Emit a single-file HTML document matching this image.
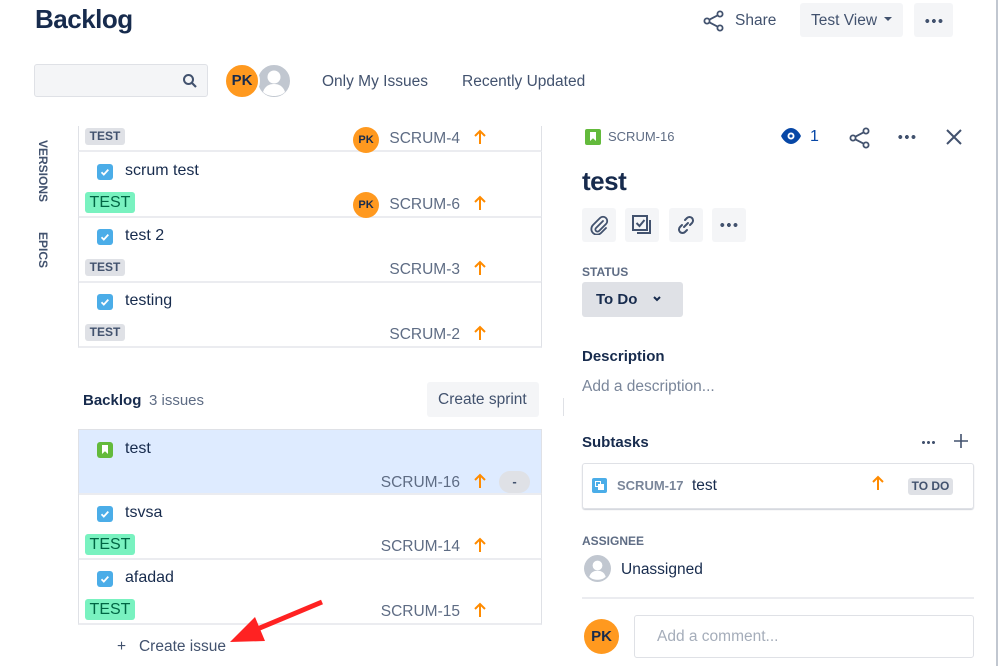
<!DOCTYPE html>
<html><head><meta charset="utf-8">
<style>
*{box-sizing:border-box;margin:0;padding:0}
body{width:999px;height:666px;overflow:hidden;background:#fff;font-family:"Liberation Sans",sans-serif;color:#172b4d;position:relative}
.a{position:absolute}
.row{position:absolute;left:78px;width:464px;height:66px;border-left:1px solid #dfe1e6;border-right:1px solid #dfe1e6;border-bottom:2px solid #ebecf0}
.cb{position:absolute;left:18px;top:12px;width:16px;height:16px;border-radius:3px;background:#4bade8}
.ttl{position:absolute;left:46px;top:10px;font-size:16px;line-height:18px}
.gt{position:absolute;left:6px;top:42px;width:40px;height:17px;background:#dfe1e6;border-radius:3px;font-size:12px;font-weight:bold;color:#42526e;text-align:center;line-height:17px}
.gr{position:absolute;left:6px;top:40px;width:50px;height:21px;background:#79f2c0;border-radius:3px;font-size:16px;color:#006644;text-align:center;line-height:21px}
.k{position:absolute;right:81px;top:44px;font-size:15.5px;color:#5e6c84;line-height:18px}
.ar{position:absolute;left:394px;top:43px}
.pk{position:absolute;width:26px;height:26px;border-radius:50%;background:#ff991f;color:#172b4d;font-size:11px;font-weight:bold;text-align:center;line-height:26px}
.btn{position:absolute;background:#f4f5f7;border-radius:3px}
.lbl{position:absolute;font-size:12px;font-weight:bold;color:#5e6c84}
</style></head><body>
<svg width="0" height="0" style="position:absolute"><defs>
<symbol id="up" viewBox="0 0 14 16"><path d="M7 15V2M2 7l5-5 5 5" stroke="#ff8b00" stroke-width="2" fill="none"/></symbol>
<symbol id="chk" viewBox="0 0 16 16"><path d="M4.5 8.3l2.3 2.3 4.5-5" stroke="#fff" stroke-width="1.8" fill="none"/></symbol>
</defs></svg>

<div class="a" style="left:35px;top:4px;font-size:26px;font-weight:bold;letter-spacing:-0.5px">Backlog</div>

<svg class="a" style="left:703px;top:10px" width="22" height="22" viewBox="0 0 22 22"><circle cx="17" cy="4" r="2.6" fill="none" stroke="#42526e" stroke-width="1.8"/><circle cx="17" cy="18" r="2.6" fill="none" stroke="#42526e" stroke-width="1.8"/><circle cx="4" cy="11" r="2.6" fill="none" stroke="#42526e" stroke-width="1.8"/><path d="M6.3 9.7l8.4-4.4M6.3 12.3l8.4 4.4" stroke="#42526e" stroke-width="1.8"/></svg>
<div class="a" style="left:735px;top:12px;font-size:15.5px;color:#42526e">Share</div>
<div class="btn" style="left:800px;top:3px;width:103px;height:34px"></div>
<div class="a" style="left:811px;top:12px;font-size:15.5px;color:#42526e">Test View</div>
<div class="a" style="left:884px;top:17px;width:0;height:0;border-left:4px solid transparent;border-right:4px solid transparent;border-top:4px solid #42526e"></div>
<div class="btn" style="left:914px;top:3px;width:39px;height:34px"></div>
<div class="a" style="left:924px;top:19px;width:20px;height:4px;background:radial-gradient(circle,#42526e 1.9px,transparent 2.1px) 0 0/6.6px 4px repeat-x"></div>
<div class="a" style="left:996px;top:0;width:2px;height:666px;background:#c1c7d0"></div>

<div class="a" style="left:34px;top:64px;width:174px;height:33px;background:#f4f5f7;border:1px solid #dfe1e6;border-radius:3px"></div>
<svg class="a" style="left:182px;top:73px" width="16" height="16" viewBox="0 0 16 16"><circle cx="6.5" cy="6.5" r="4.5" fill="none" stroke="#42526e" stroke-width="2"/><path d="M10 10l4 4" stroke="#42526e" stroke-width="2.2"/></svg>
<svg class="a" style="left:256px;top:63px" width="36" height="36" viewBox="0 0 36 36"><circle cx="18" cy="18" r="17" fill="#c1c7d0" stroke="#fff" stroke-width="2"/><circle cx="18" cy="14" r="6.5" fill="#fff"/><path d="M7 29c2-6 6-8 11-8s9 2 11 8c-3 3-7 4-11 4s-8-1-11-4z" fill="#fff"/></svg>
<div class="a" style="left:224px;top:63px;width:36px;height:36px;border-radius:50%;background:#ff991f;border:2px solid #fff;text-align:center;line-height:32px;font-size:15px;font-weight:bold">PK</div>
<div class="a" style="left:322px;top:73px;font-size:15.5px;color:#42526e">Only My Issues</div>
<div class="a" style="left:462px;top:73px;font-size:15.5px;color:#42526e">Recently Updated</div>

<div class="a" style="left:36px;top:140px;writing-mode:vertical-rl;font-size:12px;font-weight:bold;color:#42526e">VERSIONS</div>
<div class="a" style="left:36px;top:232px;writing-mode:vertical-rl;font-size:12px;font-weight:bold;color:#42526e">EPICS</div>

<div style="position:absolute;left:0;top:126px;width:560px;height:230px;overflow:hidden">
 <div class="row" style="top:-40px"><div class="gt">TEST</div><div class="pk" style="left:274px;top:41px">PK</div><div class="k">SCRUM-4</div><svg class="ar" width="14" height="16"><use href="#up"/></svg></div>
 <div class="row" style="top:26px"><div class="cb"><svg width="16" height="16"><use href="#chk"/></svg></div><div class="ttl">scrum test</div><div class="gr">TEST</div><div class="pk" style="left:274px;top:40px">PK</div><div class="k">SCRUM-6</div><svg class="ar" width="14" height="16"><use href="#up"/></svg></div>
 <div class="row" style="top:91px"><div class="cb"><svg width="16" height="16"><use href="#chk"/></svg></div><div class="ttl">test 2</div><div class="gt">TEST</div><div class="k">SCRUM-3</div><svg class="ar" width="14" height="16"><use href="#up"/></svg></div>
 <div class="row" style="top:156px"><div class="cb"><svg width="16" height="16"><use href="#chk"/></svg></div><div class="ttl">testing</div><div class="gt">TEST</div><div class="k">SCRUM-2</div><svg class="ar" width="14" height="16"><use href="#up"/></svg></div>
</div>

<div class="a" style="left:83px;top:392px;font-size:15px;font-weight:bold;color:#172b4d">Backlog</div>
<div class="a" style="left:149px;top:392px;font-size:15px;color:#5e6c84">3 issues</div>
<div class="btn" style="left:427px;top:382px;width:112px;height:35px"></div>
<div class="a" style="left:438px;top:391px;font-size:15.5px;color:#42526e">Create sprint</div>
<div class="a" style="left:563px;top:398px;width:1px;height:18px;background:#dfe1e6"></div>

<div class="row" style="top:429px;background:#deebff;border-top:1px solid #dfe1e6"><div class="a" style="left:18px;top:12px;width:16px;height:16px;border-radius:3px;background:#63ba3c"><div class="a" style="left:5px;top:3px;width:6px;height:9px;background:#fff;clip-path:polygon(0 0,100% 0,100% 100%,50% 70%,0 100%)"></div></div><div class="ttl">test</div><div class="k">SCRUM-16</div><svg class="ar" width="14" height="16"><use href="#up"/></svg><div class="a" style="left:420px;top:41px;width:31px;height:22px;border-radius:11px;background:#dfe1e6;text-align:center;font-size:13px;font-weight:bold;line-height:22px;color:#42526e">-</div></div>
<div class="row" style="top:494px"><div class="cb"><svg width="16" height="16"><use href="#chk"/></svg></div><div class="ttl">tsvsa</div><div class="gr">TEST</div><div class="k">SCRUM-14</div><svg class="ar" width="14" height="16"><use href="#up"/></svg></div>
<div class="row" style="top:559px"><div class="cb"><svg width="16" height="16"><use href="#chk"/></svg></div><div class="ttl">afadad</div><div class="gr">TEST</div><div class="k">SCRUM-15</div><svg class="ar" width="14" height="16"><use href="#up"/></svg></div>

<div class="a" style="left:117px;top:638px;font-size:15.5px;color:#42526e">+&nbsp;&nbsp; Create issue</div>
<svg class="a" style="left:225px;top:598px" width="100" height="50" viewBox="0 0 100 50"><path d="M97 4L30 32" stroke="#f22" stroke-width="5"/><path d="M5 44l25-25 10 24z" fill="#f22"/></svg>

<div class="a" style="left:585px;top:129px;width:16px;height:16px;border-radius:2px;background:#63ba3c"><div class="a" style="left:5px;top:3px;width:6px;height:9px;background:#fff;clip-path:polygon(0 0,100% 0,100% 100%,50% 70%,0 100%)"></div></div>
<div class="a" style="left:608px;top:129px;font-size:13px;color:#5e6c84">SCRUM-16</div>
<svg class="a" style="left:780px;top:127px" width="22" height="18" viewBox="0 0 22 18"><path d="M1 9C4 3 8 1 11 1s7 2 10 8c-3 6-7 8-10 8S4 15 1 9z" fill="#0747a6"/><circle cx="11" cy="9" r="3.5" fill="#fff"/><circle cx="11" cy="9" r="1.6" fill="#0747a6"/></svg>
<div class="a" style="left:810px;top:128px;font-size:16px;color:#0747a6">1</div>
<svg class="a" style="left:849px;top:127px" width="22" height="22" viewBox="0 0 22 22"><circle cx="17" cy="4" r="2.6" fill="none" stroke="#42526e" stroke-width="1.8"/><circle cx="17" cy="18" r="2.6" fill="none" stroke="#42526e" stroke-width="1.8"/><circle cx="4" cy="11" r="2.6" fill="none" stroke="#42526e" stroke-width="1.8"/><path d="M6.3 9.7l8.4-4.4M6.3 12.3l8.4 4.4" stroke="#42526e" stroke-width="1.8"/></svg>
<div class="a" style="left:897px;top:135px;width:20px;height:4px;background:radial-gradient(circle,#42526e 1.9px,transparent 2.1px) 0 0/6.6px 4px repeat-x"></div>
<svg class="a" style="left:945px;top:128px" width="18" height="18" viewBox="0 0 18 18"><path d="M2 2l14 14M16 2L2 16" stroke="#42526e" stroke-width="2"/></svg>

<div class="a" style="left:582px;top:166px;font-size:26px;font-weight:bold;letter-spacing:-0.5px">test</div>
<div class="btn" style="left:582px;top:208px;width:34px;height:34px"></div>
<div class="btn" style="left:625px;top:208px;width:34px;height:34px"></div>
<div class="btn" style="left:669px;top:208px;width:34px;height:34px"></div>
<div class="btn" style="left:712px;top:208px;width:34px;height:34px"></div>
<svg class="a" style="left:589px;top:215px" width="20" height="20" viewBox="0 0 20 20"><path d="M14 6l-7 7a2 2 0 0 0 3 3l7-7a4 4 0 0 0-6-6L4 10a5.5 5.5 0 0 0 8 8l5-5" fill="none" stroke="#42526e" stroke-width="1.8" stroke-linecap="round"/></svg>
<svg class="a" style="left:631px;top:214px" width="22" height="22" viewBox="0 0 22 22"><rect x="2" y="2" width="14" height="14" fill="none" stroke="#42526e" stroke-width="2"/><path d="M5.5 9l3 3 5-6" fill="none" stroke="#42526e" stroke-width="2"/><path d="M19 6v13H6" fill="none" stroke="#42526e" stroke-width="2"/></svg>
<svg class="a" style="left:675px;top:214px" width="22" height="22" viewBox="0 0 22 22"><path d="M9 13l4-4M10 6l2-2a3.5 3.5 0 0 1 5 5l-2 2M12 16l-2 2a3.5 3.5 0 0 1-5-5l2-2" fill="none" stroke="#42526e" stroke-width="2" stroke-linecap="round"/></svg>
<div class="a" style="left:719px;top:223px;width:20px;height:4px;background:radial-gradient(circle,#42526e 1.9px,transparent 2.1px) 0 0/6.6px 4px repeat-x"></div>

<div class="lbl" style="left:582px;top:265px">STATUS</div>
<div class="a" style="left:582px;top:282px;width:101px;height:35px;background:#dfe1e6;border-radius:3px"></div>
<div class="a" style="left:596px;top:291px;font-size:15px;font-weight:bold;color:#172b4d">To Do</div>
<svg class="a" style="left:652px;top:295px" width="10" height="8" viewBox="0 0 10 8"><path d="M2 2l3 3 3-3" fill="none" stroke="#172b4d" stroke-width="2"/></svg>

<div class="a" style="left:582px;top:348px;font-size:15px;font-weight:bold">Description</div>
<div class="a" style="left:582px;top:378px;font-size:15.5px;color:#7a869a">Add a description...</div>

<div class="a" style="left:582px;top:434px;font-size:15px;font-weight:bold">Subtasks</div>
<div class="a" style="left:921px;top:441px;width:16px;height:3px;background:radial-gradient(circle,#42526e 1.4px,transparent 1.6px) 0 0/5px 3px repeat-x"></div>
<svg class="a" style="left:954px;top:434px" width="14" height="14" viewBox="0 0 14 14"><path d="M7 0v14M0 7h14" stroke="#42526e" stroke-width="1.6"/></svg>
<div class="a" style="left:582px;top:463px;width:392px;height:46px;border:1px solid #dfe1e6;border-radius:3px;box-shadow:0 1px 1px rgba(9,30,66,.2)"></div>
<div class="a" style="left:592px;top:478px;width:15px;height:15px;background:#4bade8;border-radius:2px"><div class="a" style="left:3px;top:3px;width:6px;height:6px;border:1.5px solid #fff"></div><div class="a" style="left:6px;top:6px;width:6px;height:6px;background:#fff"></div></div>
<div class="a" style="left:617px;top:478px;font-size:13px;font-weight:bold;color:#7a869a">SCRUM-17</div>
<div class="a" style="left:692px;top:477px;font-size:15.5px">test</div>
<svg class="a" style="left:871px;top:475px" width="14" height="16"><use href="#up"/></svg>
<div class="a" style="left:908px;top:478px;width:45px;height:17px;background:#dfe1e6;border-radius:3px;font-size:12px;font-weight:bold;color:#42526e;text-align:center;line-height:17px">TO DO</div>

<div class="lbl" style="left:582px;top:534px">ASSIGNEE</div>
<svg class="a" style="left:584px;top:555px" width="27" height="27" viewBox="0 0 36 36"><circle cx="18" cy="18" r="18" fill="#c1c7d0"/><circle cx="18" cy="14" r="6.5" fill="#fff"/><path d="M7 29c2-6 6-8 11-8s9 2 11 8c-3 3-7 4-11 4s-8-1-11-4z" fill="#fff"/></svg>
<div class="a" style="left:621px;top:561px;font-size:15.5px">Unassigned</div>
<div class="a" style="left:582px;top:597px;width:392px;height:2px;background:#ebecf0"></div>
<div class="a" style="left:584px;top:619px;width:35px;height:35px;border-radius:50%;background:#ff991f;text-align:center;line-height:35px;font-size:15px;font-weight:bold">PK</div>
<div class="a" style="left:634px;top:615px;width:340px;height:43px;border:1px solid #dfe1e6;border-radius:3px"></div>
<div class="a" style="left:657px;top:628px;font-size:15.5px;color:#a5adba">Add a comment...</div>
</body></html>
